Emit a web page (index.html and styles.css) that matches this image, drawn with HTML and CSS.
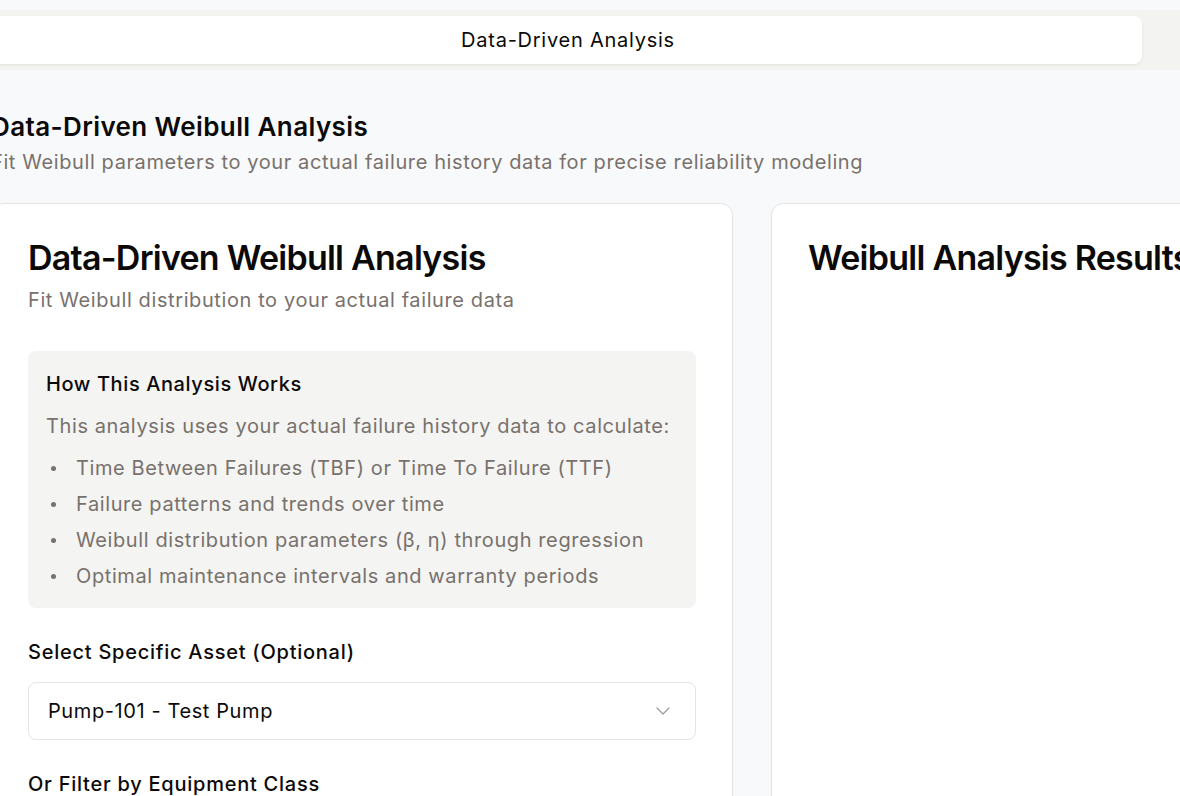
FILE: index.html
```html
<!DOCTYPE html>
<html lang="en">
<head>
<meta charset="utf-8">
<title>Data-Driven Weibull Analysis</title>
<link rel="stylesheet" href="styles.css">
</head>
<body>
<div class="page">
  <div class="tabs">
    <div class="tab active">Data-Driven Analysis</div>
    <div class="tab">Manual Analysis</div>
  </div>

  <header class="page-header">
    <h1 class="page-title">Data-Driven Weibull Analysis</h1>
    <p class="page-sub">Fit Weibull parameters to your actual failure history data for precise reliability modeling</p>
  </header>

  <div class="grid">
    <section class="card">
      <h2 class="card-title">Data-Driven Weibull Analysis</h2>
      <p class="card-sub">Fit Weibull distribution to your actual failure data</p>

      <div class="info">
        <h3 class="info-title">How This Analysis Works</h3>
        <p class="info-text">This analysis uses your actual failure history data to calculate:</p>
        <ul class="info-list">
          <li><span class="dot"></span>Time Between Failures (TBF) or Time To Failure (TTF)</li>
          <li><span class="dot"></span>Failure patterns and trends over time</li>
          <li><span class="dot"></span>Weibull distribution parameters (β, η) through regression</li>
          <li><span class="dot"></span>Optimal maintenance intervals and warranty periods</li>
        </ul>
      </div>

      <div class="field">
        <label class="label">Select Specific Asset (Optional)</label>
        <div class="select">
          <span>Pump-101 - Test Pump</span>
          <svg class="chev" width="14" height="8" viewBox="0 0 14 8" fill="none"><path d="M1 1l6 6 6-6" stroke="#9a9a9a" stroke-width="1.2" stroke-linecap="round" stroke-linejoin="round"/></svg>
        </div>
      </div>

      <div class="field">
        <label class="label">Or Filter by Equipment Class</label>
        <div class="select">
          <span>All Equipment Classes</span>
          <svg class="chev" width="14" height="8" viewBox="0 0 14 8" fill="none"><path d="M1 1l6 6 6-6" stroke="#9a9a9a" stroke-width="1.2" stroke-linecap="round" stroke-linejoin="round"/></svg>
        </div>
      </div>
    </section>

    <section class="card">
      <h2 class="card-title">Weibull Analysis Results</h2>
    </section>
  </div>
</div>
</body>
</html>
```

FILE: styles.css
```css
* { box-sizing: border-box; }
html, body { margin: 0; padding: 0; }
body {
  background: #f8f9fa;
  font-family: Inter, "Noto Sans", sans-serif;
  color: #0c0a09;
  overflow: hidden;
  width: 1180px;
  height: 796px;
}
.page {
  margin-left: -9px;
  width: 1522px;
  padding-top: 10px;
}
.tabs {
  display: flex;
  background: #f3f3f2;
  padding: 6px 3px;
  border-radius: 10px;
  height: 60px;
}
.tab {
  width: 1148px;
  height: 48px;
  flex: none;
  display: flex;
  align-items: center;
  justify-content: center;
  font-size: 20px;
  letter-spacing: 0.75px;
  color: #78716c;
  border-radius: 8px;
}
.tab.active {
  background: #fff;
  color: #0c0a09;
  box-shadow: 0 1px 3px rgba(0,0,0,0.08);
}
.page-header { margin-top: 41px; }
.page-title {
  margin: 0;
  font-size: 26px;
  line-height: 32px;
  font-weight: 600;
  letter-spacing: 0.4px;
}
.page-sub {
  margin: 5px 0 0;
  font-size: 20px;
  line-height: 28px;
  letter-spacing: 0.6px;
  color: #78716c;
}
.grid {
  margin-top: 27px;
  display: grid;
  grid-template-columns: 742px 742px;
  gap: 38px;
}
.card {
  background: #fff;
  border: 1px solid #e4e4e2;
  border-radius: 12px;
  padding: 34px 36px;
  box-shadow: 0 1px 2px rgba(0,0,0,0.04);
  height: 700px;
}
.card-title {
  margin: 0;
  font-size: 34px;
  line-height: 40px;
  font-weight: 600;
  letter-spacing: -0.022em;
}
.card-sub, .info-title, .info-text, .info-list li, .label, .select {
  font-size: 20px;
  line-height: 28px;
  letter-spacing: 0.6px;
}
.card-sub {
  margin: 8px 0 0;
  color: #78716c;
}
.info {
  margin-top: 37px;
  background: #f4f4f3;
  border-radius: 8px;
  padding: 19px 18px 18px;
}
.info-title {
  margin: 0;
  font-weight: 500;
}
.info-text {
  margin: 14px 0 0;
  color: #78716c;
}
.info-list {
  list-style: none;
  margin: 14px 0 0;
  padding: 0;
  display: flex;
  flex-direction: column;
  gap: 8px;
}
.info-list li {
  display: flex;
  align-items: center;
  color: #78716c;
}
.dot {
  width: 5px;
  height: 5px;
  border-radius: 50%;
  background: #78716c;
  margin-left: 5px;
  margin-right: 20px;
  flex: none;
}
.field { margin-top: 30px; }
.label {
  display: block;
  font-weight: 500;
  letter-spacing: 0.75px;
}
.select {
  margin-top: 16px;
  height: 58px;
  border: 1px solid #e4e4e2;
  border-radius: 8px;
  display: flex;
  align-items: center;
  justify-content: space-between;
  padding: 0 25px 0 19px;
}
.chev { flex: none; }
```
